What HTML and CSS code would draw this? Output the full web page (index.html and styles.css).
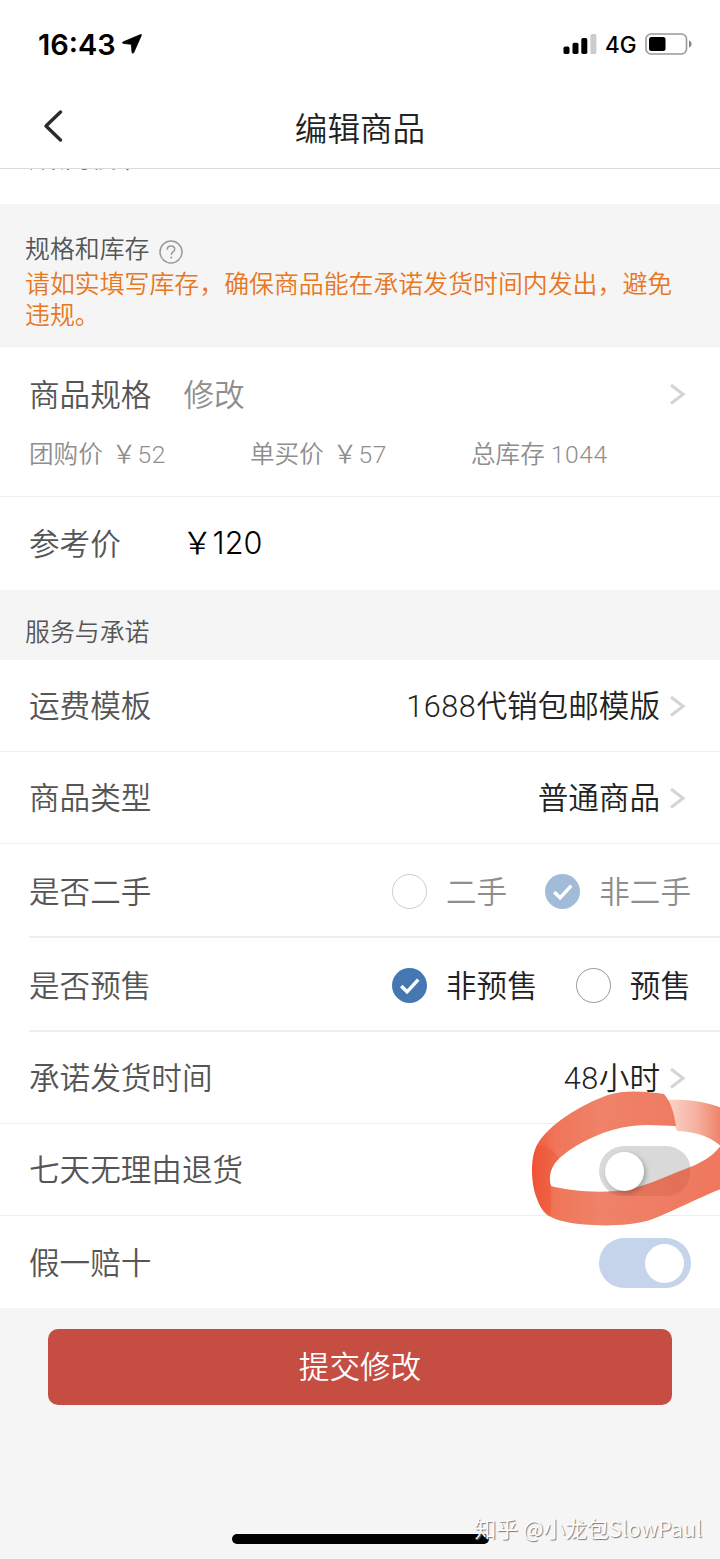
FILE: index.html
```html
<!DOCTYPE html>
<html lang="zh-CN">
<head>
  <meta charset="UTF-8" />
  <meta name="viewport" content="width=device-width, initial-scale=1.0"/>
  <title>编辑商品</title>
  <link rel="stylesheet" href="styles.css">
</head>
<body>

  <div class="status-bar">
    <span class="time">16:43</span>
    <svg class="location" width="20" height="20" viewBox="0 0 20 20"><path d="M18.6.6 1.4 7.8C0 8.5.3 9.3 1.5 9.4L9.3 10.300 10 18.200C10.200 19.500 11.200 19.600 11.800 18.400L19.300 1.500C19.600.7 19.200.3 18.600.6Z"/></svg>
    <svg class="signal" width="34" height="22" viewBox="0 0 34 22">
      <rect x="0.500" y="13.500" width="6" height="7.500" rx="1.700"/>
      <rect x="9.500" y="9.700" width="6" height="11.300" rx="1.700"/>
      <rect x="18.300" y="5" width="6" height="16" rx="1.700"/>
      <rect class="weak" x="27.400" y="1" width="6" height="20" rx="1.700"/>
    </svg>
    <span class="network">4G</span>
    <svg class="battery" width="48" height="22" viewBox="0 0 48 22">
      <rect class="shell" x="1" y="1" width="40.500" height="20" rx="5"/>
      <rect x="4" y="4" width="16.500" height="14" rx="2.500"/>
      <path class="tip" d="M44 7.300C47.500 9 47.500 13 44 14.700Z"/>
    </svg>
  </div>

  <header class="nav">
    <svg class="back" width="20" height="34" viewBox="0 0 20 34"><path d="M17.500 3 3 17 17.500 31"/></svg>
    <h1>编辑商品</h1>
  </header>

  <!-- row that is scrolled under the title bar -->
  <div class="scrolled"><span>所属价位</span></div>

  <section class="group-title stock">
    <h2>规格和库存
      <svg class="help" width="24" height="24" viewBox="0 0 24 24"><circle cx="12" cy="12" r="11"/><path d="M8.300 9.700C8.300 7.300 9.800 6 12 6S15.700 7.400 15.700 9.300C15.700 11.700 12.200 12 12.200 14.800"/><circle class="dot" cx="12.200" cy="17.600" r="1"/></svg>
    </h2>
    <p>请如实填写库存，确保商品能在承诺发货时间内发出，避免违规。</p>
  </section>

  <div class="spec">
    <div class="spec-head">
      <span class="label">商品规格</span>
      <span class="edit">修改</span>
      <svg class="arrow" width="18" height="24" viewBox="0 0 18 24"><path d="M3 3 15 12.300 3 21.500"/></svg>
    </div>
    <div class="prices">
      <span>团购价<span class="yen">￥</span><span class="num">52</span></span>
      <span>单买价<span class="yen">￥</span><span class="num">57</span></span>
      <span>总库存 <span class="num">1044</span></span>
    </div>
  </div>
  <div class="row reference">
    <span class="label">参考价</span>
    <span class="price"><span class="yen">￥</span>120</span>
  </div>

  <section class="group-title service">
    <h2>服务与承诺</h2>
  </section>

  <div class="row">
    <span class="label">运费模板</span>
    <span class="value"><span class="num">1688</span>代销包邮模版</span>
    <svg class="arrow" width="18" height="24" viewBox="0 0 18 24"><path d="M3 3 15 12.300 3 21.500"/></svg>
  </div>
  <div class="row">
    <span class="label">商品类型</span>
    <span class="value">普通商品</span>
    <svg class="arrow" width="18" height="24" viewBox="0 0 18 24"><path d="M3 3 15 12.300 3 21.500"/></svg>
  </div>
  <div class="row inset disabled">
    <span class="label">是否二手</span>
    <span class="option"><i class="radio"></i><span>二手</span></span>
    <span class="option">
      <i class="radio checked"><svg viewBox="0 0 36 36"><path d="M9.500 18.500 15.500 24.500 27 12"/></svg></i><span>非二手</span>
    </span>
  </div>
  <div class="row inset">
    <span class="label">是否预售</span>
    <span class="option">
      <i class="radio checked"><svg viewBox="0 0 36 36"><path d="M9.500 18.500 15.500 24.500 27 12"/></svg></i><span>非预售</span>
    </span>
    <span class="option"><i class="radio"></i><span>预售</span></span>
  </div>
  <div class="row">
    <span class="label">承诺发货时间</span>
    <span class="value"><span class="num">48</span>小时</span>
    <svg class="arrow" width="18" height="24" viewBox="0 0 18 24"><path d="M3 3 15 12.300 3 21.500"/></svg>
  </div>
  <div class="row return">
    <span class="label">七天无理由退货</span>
    <span class="switch"><i></i></span>
    <!-- hand drawn marker around the switch -->
    <svg class="marker" width="200" height="150" viewBox="520 1085 200 150">
      <defs>
        <linearGradient id="ink" x1="0" x2="1">
          <stop offset="0" stop-color="#f05032"/>
          <stop offset="0.120" stop-color="#ef7052"/>
          <stop offset="0.350" stop-color="#ee7d62"/>
          <stop offset="1" stop-color="#ee7257"/>
        </linearGradient>
        <linearGradient id="fade" x1="0" x2="1">
          <stop offset="0" stop-color="#fbd9d0"/>
          <stop offset="0.550" stop-color="#f5b09e"/>
          <stop offset="1" stop-color="#ee7b61"/>
        </linearGradient>
        <filter id="soft"><feGaussianBlur stdDeviation="0.700"/></filter>
      </defs>
      <g filter="url(#soft)">
        <path fill="url(#fade)" d="M664 1100C686 1099 706 1101 724 1109V1150C715 1138 698 1132 677 1131Z"/>
        <path fill="url(#ink)" fill-opacity="0.960" d="M664 1094C645 1091 623 1090 608 1095C580 1105 548 1125 537 1145C530 1158 531 1183 536 1196C541 1212 549 1218 562 1221C586 1227 629 1227 650 1220C675 1211 697 1198 724 1188V1141C716 1153 708 1160 688 1168C661 1178 638 1190 617 1191C590 1193 567 1190 551 1186C548 1176 551 1165 562 1156C579 1142 606 1129 632 1126C648 1124 662 1126 676 1126C674 1113 671 1102 664 1094Z"/>
        <path fill="#ef4427" fill-opacity="0.300" d="M537 1145C530 1160 532 1185 536 1196C540 1209 545 1215 550 1217C552 1205 551 1195 551 1186C548 1176 551 1165 559 1159C555 1150 546 1144 537 1145Z"/>
        <path fill="#a84430" fill-opacity="0.160" d="M690 1167C692 1182 682 1196 667 1196H623C616 1196 611 1194 607 1191C636 1192 661 1178 690 1167Z"/>
      </g>
    </svg>
  </div>
  <div class="row last">
    <span class="label">假一赔十</span>
    <span class="switch on"><i></i></span>
  </div>

  <footer>
    <button type="button">提交修改</button>
    <div class="home-bar"></div>
    <span class="watermark">知乎 @小龙包SlowPaul</span>
  </footer>

</body>
</html>
```
FILE: styles.css
```css
* {
  box-sizing: border-box;
}
body {
  font-family: Roboto, "Noto Sans CJK SC", sans-serif;
  font-weight: 350;
  background: #f5f5f5;
  color: #222;
  margin: 0;
  width: 720px;
  height: 1559px;
  overflow: hidden;
}
svg {
  display: block;
  flex: none;
}
h1, h2, p {
  margin: 0;
  font-weight: inherit;
}
.num {
  font-weight: 300;
  letter-spacing: 0.6px;
}

/* status bar and title */
.status-bar {
  height: 88px;
  padding: 0 27px 0 38px;
  display: flex;
  align-items: center;
  background: #fff;
  color: #000;
  font-family: Inter, sans-serif;
}
.time {
  font-size: 29px;
  font-weight: 600;
  width: 84px;
  white-space: nowrap;
}
.location path {
  stroke: #000;
  stroke-width: 0.8;
}
.signal {
  margin-left: auto;
}
.signal .weak {
  fill: #ccc;
}
.network {
  font-size: 22.5px;
  font-weight: 500;
  width: 48px;
  padding-left: 8px;
  white-space: nowrap;
}
.battery .shell {
  fill: none;
  stroke: #999;
  stroke-width: 1.6;
}
.battery .tip {
  fill: #888;
}
.nav {
  height: 81px;
  padding: 0 43px 4px;
  display: grid;
  grid-template-columns: 20px 1fr 20px;
  align-items: center;
  background: #fff;
  border-bottom: 1px solid #dcdcdc;
}
.nav h1 {
  font-size: 32.6px;
  text-align: center;
}
.back {
  fill: none;
  stroke: #2b2b2b;
  stroke-width: 3.4;
  stroke-linecap: round;
  stroke-linejoin: round;
}
.scrolled {
  height: 35px;
  padding-left: 29px;
  overflow: hidden;
  background: #fff;
  color: #777;
  font-size: 30.6px;
  line-height: 36px;
}
.scrolled span {
  display: block;
  margin-top: -30px;
}

/* grey group titles */
.group-title {
  padding-left: 25px;
  color: #555;
}
.group-title h2 {
  display: flex;
  align-items: center;
  gap: 10px;
  font-size: 24.9px;
  line-height: 32px;
}
.stock {
  height: 142px;
  padding-top: 30px;
}
.stock p {
  width: 660px;
  margin-top: 3px;
  color: #e87722;
  font-size: 24.9px;
  line-height: 31px;
}
.service {
  height: 70px;
  padding-top: 27px;
}
.help {
  margin-top: 3px;
  fill: none;
  stroke: #999;
  stroke-width: 1.5;
}
.help .dot {
  fill: #999;
  stroke: none;
}

/* list rows */
.label, .value, .edit, .price, .option span {
  padding-bottom: 3px;
}
.value span {
  padding: 0;
}
.label {
  color: #555;
}
.arrow {
  fill: none;
  stroke: #d5d5d5;
  stroke-width: 3.2;
}
.spec {
  height: 151px;
  padding: 25px 34px 0 29px;
  background: #fff;
  border-top: 1px solid #eee;
  border-bottom: 1px solid #f0f0f0;
}
.spec-head {
  display: flex;
  align-items: center;
  height: 44px;
  font-size: 30.6px;
}
.edit {
  margin-left: 32px;
  color: #8e8e8e;
}
.spec-head .arrow {
  margin-left: auto;
}
.prices {
  display: grid;
  grid-template-columns: 221px 221px 1fr;
  margin-top: 21px;
  font-size: 24.6px;
  line-height: 36px;
  color: #8e8e8e;
}
.prices .yen {
  margin: 0 1px 0 9px;
}
.row {
  height: 92px;
  padding: 0 34px 0 29px;
  display: flex;
  align-items: center;
  background: #fff;
  border-bottom: 1px solid #eee;
  font-size: 30.6px;
}
.row .label {
  margin-right: auto;
}
.row .value {
  margin-right: 8px;
}
.row.inset {
  height: 94px;
  padding-right: 29px;
  background: linear-gradient(#eee, #eee) 29px 100% / 691px 2px no-repeat #fff;
  border: none;
}
.row.reference {
  height: 93px;
  border: none;
}
.row.reference .label {
  width: 153px;
  margin: 0;
}
.price {
  padding-bottom: 5px;
  color: #000;
  font-family: Inter, "Noto Sans CJK SC", sans-serif;
  font-weight: 300;
}
.price .yen {
  font-weight: 350;
}
.option {
  display: flex;
  align-items: center;
  margin-left: 38px;
}
.radio {
  width: 35px;
  height: 35px;
  margin-right: 19px;
  border: 1.5px solid #999;
  border-radius: 50%;
}
.radio.checked {
  border: none;
  background: #4577b2;
}
.radio svg {
  width: 35px;
  height: 35px;
  fill: none;
  stroke: #fff;
  stroke-width: 3.6;
}
.disabled .option {
  color: #8e8e8e;
}
.disabled .radio {
  border-color: #ccc;
}
.disabled .radio.checked {
  background: #a2bbd9;
}
.switch {
  width: 92px;
  height: 50px;
  margin-top: 2px;
  padding: 6px;
  border-radius: 25px;
  background: #d9d9d9;
}
.switch i {
  display: block;
  width: 39px;
  height: 39px;
  border-radius: 50%;
  background: #fff;
  box-shadow: 2px 2px 5px rgba(0,0,0,0.25);
}
.switch.on {
  background: #c5d4eb;
}
.switch.on i {
  margin-left: 40px;
  box-shadow: none;
}
.row.return {
  position: relative;
  padding-right: 29px;
}
.marker {
  position: absolute;
  top: -39px;
  right: 0;
  z-index: 1;
}
.return .switch i {
  position: relative;
  z-index: 2;
}
.row.last {
  padding-right: 29px;
  border: none;
}

/* submit button and bottom of the screen */
footer {
  position: relative;
  height: 251px;
  padding: 21px 48px 0;
}
button {
  display: block;
  width: 100%;
  height: 76px;
  padding: 0 0 4px;
  background: #c64d42;
  color: #fff;
  border: none;
  border-radius: 10px;
  font-family: inherit;
  font-size: 30.6px;
  font-weight: 350;
}
.home-bar {
  width: 257px;
  height: 10px;
  margin: 129px auto 0;
  border-radius: 5px;
  background: #000;
}
.watermark {
  position: absolute;
  right: 18px;
  bottom: 16px;
  color: #fff;
  font-family: "Noto Sans CJK SC", sans-serif;
  font-size: 21.8px;
  line-height: 30px;
  font-weight: 350;
  text-shadow: 1px 1px 1px #777;
}
```
